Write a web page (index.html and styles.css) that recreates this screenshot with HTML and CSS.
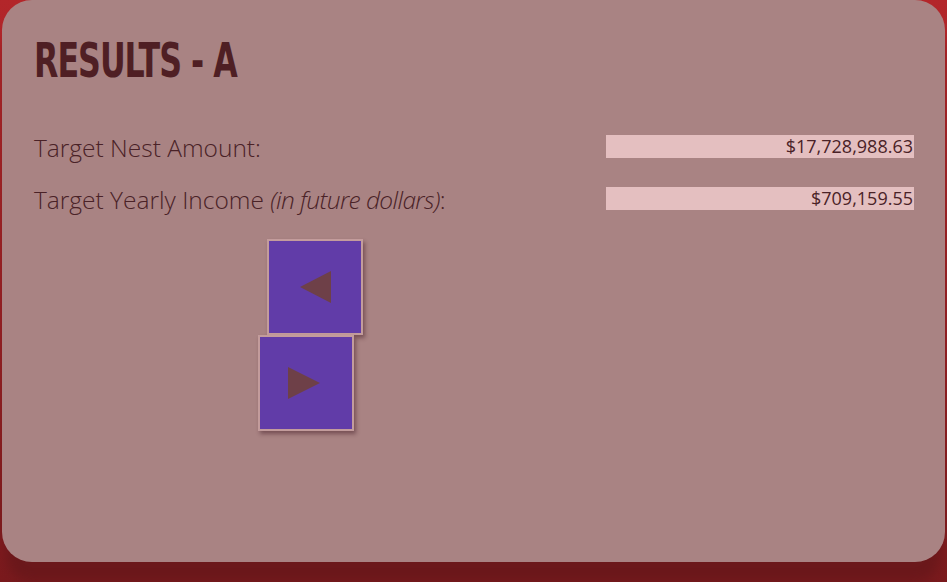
FILE: index.html
```html
<!DOCTYPE html>
<html lang="en">
<head>
<meta charset="utf-8">
<title>Results - A</title>
<link rel="stylesheet" href="styles.css">
</head>
<body>
<main class="card">
  <h1 class="title">RESULTS - A</h1>
  <div class="row">
    <span class="label">Target Nest Amount:</span>
    <span class="value">$17,728,988.63</span>
  </div>
  <div class="row">
    <span class="label">Target Yearly Income <em class="note">(in future dollars)</em>:</span>
    <span class="value">$709,159.55</span>
  </div>
  <div class="nav">
    <button class="btn btn-prev" type="button" aria-label="Previous">
      <svg width="32" height="32" viewBox="0 0 32 32"><polygon points="0,16 31,0 31,32" fill="#6e4048"/></svg>
    </button>
    <button class="btn btn-next" type="button" aria-label="Next">
      <svg width="32" height="32" viewBox="0 0 32 32"><polygon points="0,0 32,16 0,32" fill="#6e4048"/></svg>
    </button>
  </div>
</main>
</body>
</html>
```
FILE: styles.css
```css
html, body {
  margin: 0;
  padding: 0;
}
body {
  width: 947px;
  height: 582px;
  overflow: hidden;
  background: linear-gradient(180deg, #b3262a 0%, #962024 60%, #7a1a1d 100%);
}
.card {
  box-sizing: border-box;
  margin-left: 2px;
  width: 943px;
  height: 562px;
  background: #a98383;
  border-radius: 30px;
  box-shadow: 0 24px 12px -4px #6b181b;
  padding: 30px 31px 0 32px;
  color: #4a2227;
  font-family: "Open Sans", "DejaVu Sans", sans-serif;
}
.title {
  margin: 0 0 30px;
  font-family: "DejaVu Sans", sans-serif;
  font-weight: bold;
  font-size: 48px;
  line-height: 60px;
  color: #4f1f24;
  letter-spacing: -1.5px;
  transform: scaleX(0.66);
  transform-origin: left center;
  white-space: nowrap;
}
.row {
  display: flex;
  justify-content: space-between;
  align-items: center;
  height: 52px;
}
.label {
  font-weight: 300;
  font-size: 24.5px;
  color: #4a2227;
  position: relative;
  top: 1px;
}
.note {
  font-style: italic;
  letter-spacing: -0.6px;
}
.value {
  box-sizing: border-box;
  width: 308px;
  height: 23px;
  background: #e4bfc0;
  text-align: right;
  font-family: "Open Sans", sans-serif;
  font-size: 18px;
  line-height: 23px;
  padding-right: 1px;
  color: #4a2227;
}
.nav {
  display: flex;
  flex-direction: column;
  align-items: flex-start;
  margin-top: 15px;
}
.btn {
  box-sizing: border-box;
  width: 96px;
  height: 96px;
  padding: 0;
  background: #613ca8;
  border: 2px solid #c39c9c;
  box-shadow: 2px 3px 4px rgba(60, 20, 30, 0.45);
  display: flex;
  align-items: center;
  justify-content: center;
  cursor: pointer;
}
.btn-prev {
  margin-left: 233px;
}
.btn-prev svg {
  margin-left: 2px;
}
.btn-next {
  margin-left: 224px;
  margin-top: 0;
}
.btn-next svg {
  margin-left: -4px;
}
```
